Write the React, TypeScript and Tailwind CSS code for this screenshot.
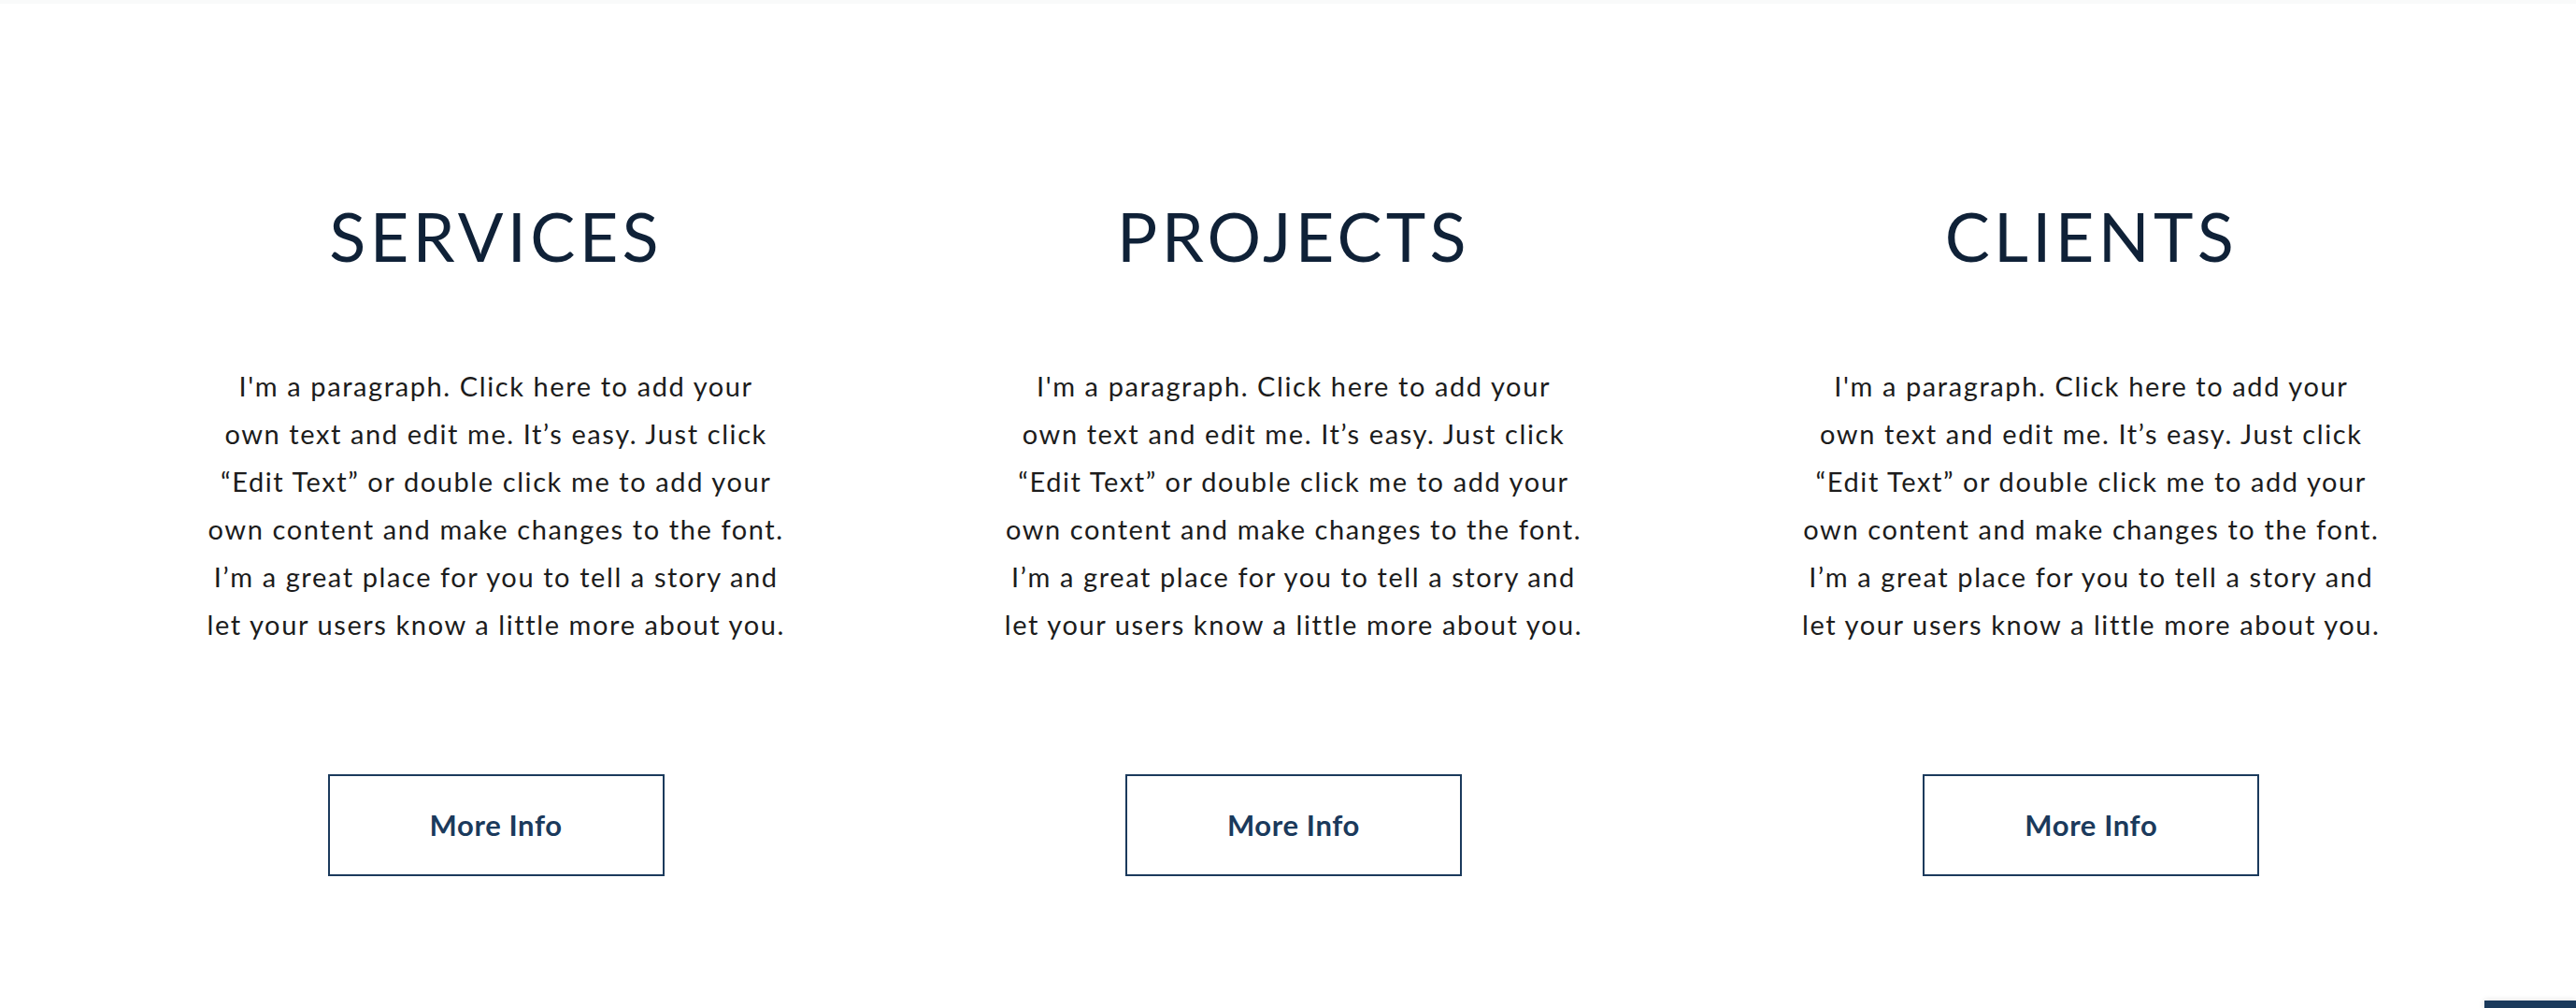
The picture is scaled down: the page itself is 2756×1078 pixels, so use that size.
const columns = [
  { title: "SERVICES" },
  { title: "PROJECTS" },
  { title: "CLIENTS" },
];

const paragraph = [
  "I'm a paragraph. Click here to add your",
  "own text and edit me. It\u2019s easy. Just click",
  "\u201cEdit Text\u201d or double click me to add your",
  "own content and make changes to the font.",
  "I\u2019m a great place for you to tell a story and",
  "let your users know a little more about you.",
];

export default function App() {
  return (
    <main className="relative w-full h-screen overflow-hidden bg-white font-['Lato','Open_Sans',sans-serif]">
      {/* faint strip at the very top */}
      <div className="h-[4px] w-full bg-[#f9fafa]" />

      <section className="grid grid-cols-3 pl-[104px] pr-[92px] pt-[212px]">
        {columns.map((col) => (
          <div key={col.title} className="flex flex-col items-center">
            <h2 className="text-[72px] leading-none tracking-[0.06em] font-normal text-[#0f2137]">
              {col.title}
            </h2>

            <p className="mt-[99px] text-center text-[29px] leading-[51px] tracking-[0.055em] font-normal text-[#1c1c1c]">
              {paragraph.map((line, i) => (
                <span key={i} className="block whitespace-nowrap">
                  {line}
                </span>
              ))}
            </p>

            <button
              type="button"
              className="mt-[135px] flex h-[109px] w-[360px] items-center justify-center border-2 border-[#1b3a5c] text-[31px] tracking-[0.02em] font-bold text-[#1b3a5c]"
            >
              More Info
            </button>
          </div>
        ))}
      </section>

      {/* chat widget tab peeking from the bottom right */}
      <div className="absolute bottom-0 right-0 h-[8px] w-[98px] bg-[#1b3a5c] shadow-[0_0_6px_rgba(0,0,0,0.15)]" />
    </main>
  );
}
